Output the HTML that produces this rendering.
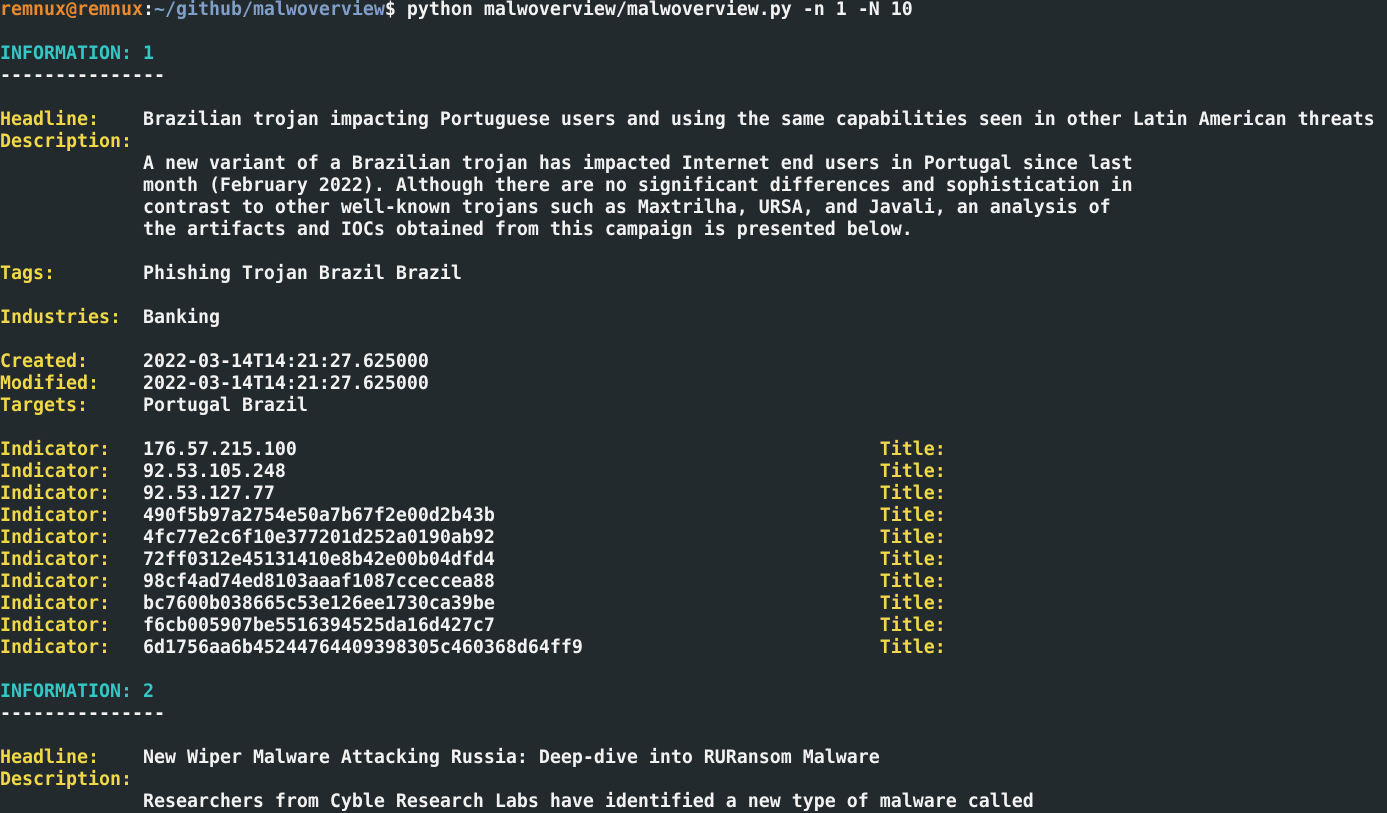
<!DOCTYPE html>
<html><head><meta charset="utf-8"><style>
html,body{margin:0;padding:0;background:#232a2d;width:1387px;height:813px;overflow:hidden}
pre{margin:0;position:absolute;left:0;top:-1px;font-family:"DejaVu Sans Mono","Liberation Mono",monospace;font-weight:bold;font-size:18.27px;line-height:22px;color:#f2f2f2;white-space:pre}
.o{color:#e8892e}.b{color:#7f9fc8}.c{color:#35c6c6}.y{color:#f0d848}
</style></head><body><pre><span class="o">remnux@remnux</span>:<span class="b">~/github/malwoverview</span>$ python malwoverview/malwoverview.py -n 1 -N 10

<span class="c">INFORMATION: 1</span>
---------------

<span class="y">Headline:</span>    Brazilian trojan impacting Portuguese users and using the same capabilities seen in other Latin American threats
<span class="y">Description:</span>
             A new variant of a Brazilian trojan has impacted Internet end users in Portugal since last
             month (February 2022). Although there are no significant differences and sophistication in
             contrast to other well-known trojans such as Maxtrilha, URSA, and Javali, an analysis of
             the artifacts and IOCs obtained from this campaign is presented below.

<span class="y">Tags:</span>        Phishing Trojan Brazil Brazil

<span class="y">Industries:</span>  Banking

<span class="y">Created:</span>     2022-03-14T14:21:27.625000
<span class="y">Modified:</span>    2022-03-14T14:21:27.625000
<span class="y">Targets:</span>     Portugal Brazil

<span class="y">Indicator:</span>   176.57.215.100                                                     <span class="y">Title:</span>
<span class="y">Indicator:</span>   92.53.105.248                                                      <span class="y">Title:</span>
<span class="y">Indicator:</span>   92.53.127.77                                                       <span class="y">Title:</span>
<span class="y">Indicator:</span>   490f5b97a2754e50a7b67f2e00d2b43b                                   <span class="y">Title:</span>
<span class="y">Indicator:</span>   4fc77e2c6f10e377201d252a0190ab92                                   <span class="y">Title:</span>
<span class="y">Indicator:</span>   72ff0312e45131410e8b42e00b04dfd4                                   <span class="y">Title:</span>
<span class="y">Indicator:</span>   98cf4ad74ed8103aaaf1087cceccea88                                   <span class="y">Title:</span>
<span class="y">Indicator:</span>   bc7600b038665c53e126ee1730ca39be                                   <span class="y">Title:</span>
<span class="y">Indicator:</span>   f6cb005907be5516394525da16d427c7                                   <span class="y">Title:</span>
<span class="y">Indicator:</span>   6d1756aa6b45244764409398305c460368d64ff9                           <span class="y">Title:</span>

<span class="c">INFORMATION: 2</span>
---------------

<span class="y">Headline:</span>    New Wiper Malware Attacking Russia: Deep-dive into RURansom Malware
<span class="y">Description:</span>
             Researchers from Cyble Research Labs have identified a new type of malware called
</pre></body></html>
